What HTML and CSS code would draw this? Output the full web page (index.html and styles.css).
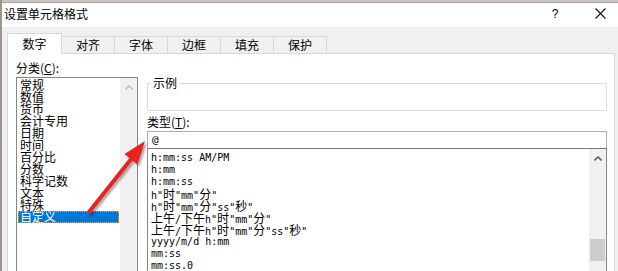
FILE: index.html
```html
<!DOCTYPE html>
<html lang="zh-CN">
<head>
    <meta charset="UTF-8">
    <meta name="viewport" content="width=device-width, initial-scale=1.0">
    <link rel="stylesheet" href="styles.css">
    <title>设置单元格格式</title>
</head>
<body>
    <div class="window">
        <div class="topstrip"></div>
        <div class="titlebar">
            <span class="title">设置单元格格式</span>
            <span class="help">?</span>
            <span class="close">
                <svg width="11" height="11" viewBox="0 0 11 11"><path d="M0.5 0.5 L10.5 10.5 M10.5 0.5 L0.5 10.5" stroke="#111" stroke-width="1.1" fill="none"/></svg>
            </span>
        </div>
        <div class="dialog">
            <div class="tabs">
                <div class="tab active">数字</div>
                <div class="tab">对齐</div>
                <div class="tab">字体</div>
                <div class="tab">边框</div>
                <div class="tab">填充</div>
                <div class="tab">保护</div>
            </div>
            <div class="panel">
                <div class="col-left">
                    <div class="label">分类(<u>C</u>):</div>
                    <div class="listbox">
                        <ul class="items">
                            <li>常规</li>
                            <li>数值</li>
                            <li>货币</li>
                            <li>会计专用</li>
                            <li>日期</li>
                            <li>时间</li>
                            <li>百分比</li>
                            <li>分数</li>
                            <li>科学记数</li>
                            <li>文本</li>
                            <li>特殊</li>
                            <li class="selected">自定义</li>
                        </ul>
                        <div class="vscroll light">
                            <div class="arrow-btn">
                                <svg width="8" height="5" viewBox="0 0 8 5"><polyline points="0.5,4.5 4,1 7.5,4.5" stroke="#bdbdbd" stroke-width="1.6" fill="none"/></svg>
                            </div>
                        </div>
                    </div>
                </div>
                <div class="col-right">
                    <fieldset class="sample">
                        <legend>示例</legend>
                        <div class="sample-body"></div>
                    </fieldset>
                    <div class="label">类型(<u>T</u>):</div>
                    <div class="typeinput">@</div>
                    <div class="formats">
                        <ul class="fmt-items">
                            <li>h:mm:ss AM/PM</li>
                            <li>h:mm</li>
                            <li>h:mm:ss</li>
                            <li>h"<span class="cn">时</span>"mm"<span class="cn">分</span>"</li>
                            <li>h"<span class="cn">时</span>"mm"<span class="cn">分</span>"ss"<span class="cn">秒</span>"</li>
                            <li><span class="cn">上午</span>/<span class="cn">下午</span>h"<span class="cn">时</span>"mm"<span class="cn">分</span>"</li>
                            <li><span class="cn">上午</span>/<span class="cn">下午</span>h"<span class="cn">时</span>"mm"<span class="cn">分</span>"ss"<span class="cn">秒</span>"</li>
                            <li>yyyy/m/d h:mm</li>
                            <li>mm:ss</li>
                            <li>mm:ss.0</li>
                        </ul>
                        <div class="vscroll">
                            <div class="arrow-btn">
                                <svg width="8" height="5" viewBox="0 0 8 5"><polyline points="0.5,4.5 4,1 7.5,4.5" stroke="#606060" stroke-width="1.6" fill="none"/></svg>
                            </div>
                            <div class="thumb"></div>
                        </div>
                    </div>
                </div>
            </div>
        </div>
    </div>

    <!-- red annotation arrow pointing at the type box -->
    <svg class="annot" width="618" height="271" viewBox="0 0 618 271">
        <defs>
            <filter id="shadow" x="-20%" y="-20%" width="140%" height="140%">
                <feDropShadow dx="2" dy="2" stdDeviation="1.2" flood-color="#000" flood-opacity="0.35"/>
            </filter>
        </defs>
        <g filter="url(#shadow)">
            <line x1="89" y1="212" x2="132" y2="158" stroke="#e8241f" stroke-width="4" stroke-linecap="round"/>
            <polygon points="145,141 137.5,164.5 124.5,154" fill="#e8241f"/>
        </g>
    </svg>
</body>
</html>
```

FILE: styles.css
```css
*{
    margin: 0;
    padding: 0;
    box-sizing: border-box;
}
:root{
    --ui-font: "Noto Sans CJK SC", "Liberation Sans", sans-serif;
    --mono-font: "DejaVu Sans Mono", "Noto Sans CJK SC", monospace;
}
body{
    width: 618px;
    height: 271px;
    overflow: hidden;
    background: #f0f0f0;
    font-family: var(--ui-font);
    font-size: 12px;
    color: #000;
    position: relative;
}
.window{
    height: 271px;
    display: flex;
    flex-direction: column;
    border-left: 2px solid #9e958b;
}
.topstrip{
    flex-shrink: 0;
    height: 3px;
    background: #c9c4bd;
    border-bottom: 1px solid #a8a29a;
}
.titlebar{
    flex-shrink: 0;
    height: 24px;
    background: #fff;
    display: flex;
    align-items: center;
    padding-left: 2px;
    padding-right: 8px;
    padding-bottom: 3px;
}
.title{
    font-size: 12px;
    line-height: 14px;
}
.help{
    margin-left: auto;
    width: 14px;
    text-align: center;
    font-family: "Liberation Sans", sans-serif;
    font-size: 12px;
    margin-right: 28px;
}
.close{
    width: 20px;
    display: flex;
    justify-content: center;
}
.dialog{
    flex: 1;
    min-height: 0;
    overflow: hidden;
    display: flex;
    flex-direction: column;
    padding-top: 6px;
    padding-left: 5px;
}
.tabs{
    flex-shrink: 0;
    display: flex;
    align-items: flex-end;
    height: 20px;
}
.tab{
    width: 54px;
    height: 17px;
    margin-left: -1px;
    border: 1px solid #d9d9d9;
    border-bottom: none;
    background: #f0f0f0;
    text-align: center;
    line-height: 16px;
}
.tab.active{
    width: 55px;
    height: 21px;
    margin-left: 0;
    margin-bottom: -1px;
    background: #fff;
    position: relative;
    z-index: 1;
    line-height: 20px;
}
.panel{
    flex: 1 0 auto;
    width: 608px;
    background: #fff;
    border: 1px solid #d9d9d9;
    border-bottom: none;
    padding: 7px 0 0 8px;
    display: grid;
    grid-template-columns: 122px 460px;
    column-gap: 9px;
    align-items: start;
}
.label{
    line-height: 14px;
    height: 14px;
}
.col-left .label{
    margin-bottom: 2px;
}
.listbox{
    height: 200px;
    border: 1px solid #828790;
    display: flex;
}
.items{
    list-style: none;
    flex: 1;
    padding-top: 1px;
}
.items li{
    height: 12px;
    line-height: 12px;
    margin: 0 1px;
    padding-left: 2px;
    white-space: nowrap;
}
.items li.selected{
    background: #0078d7;
    color: #fff;
    outline: 1px dotted #f3a33a;
    outline-offset: -1px;
}
.vscroll{
    width: 17px;
    background: #f0f0f0;
    display: flex;
    flex-direction: column;
    align-items: center;
}
.arrow-btn{
    height: 17px;
    width: 17px;
    display: flex;
    align-items: center;
    justify-content: center;
    padding-top: 2px;
}
.thumb{
    width: 15px;
    height: 22px;
    margin-top: 73px;
    background: #cdcdcd;
}
.sample{
    margin-top: 16px;
    border: 1px solid #dcdcdc;
    padding: 0;
}
.sample legend{
    margin-left: 3px;
    padding: 0 2px;
    line-height: 12px;
    font-size: 12px;
}
.sample-body{
    height: 21px;
}
.col-right .label{
    margin-top: 4px;
    margin-bottom: 2px;
}
.typeinput{
    height: 18px;
    border: 1px solid #adadad;
    border-bottom: 1px solid #7a7a7a;
    padding-left: 4px;
    font-family: var(--mono-font);
    font-size: 11px;
    line-height: 16px;
}
.formats{
    height: 140px;
    border: 1px solid #828790;
    border-top: none;
    display: flex;
}
.fmt-items{
    list-style: none;
    flex: 1;
    padding-top: 3px;
    padding-left: 3px;
}
.fmt-items li{
    height: 12px;
    line-height: 12px;
    color: #000;
    font-family: var(--mono-font);
    font-size: 10px;
    white-space: nowrap;
}
.fmt-items .cn{
    font-family: var(--ui-font);
    font-size: 12px;
    line-height: 12px;
}
.annot{
    position: absolute;
    left: 0;
    top: 0;
    pointer-events: none;
}
```
